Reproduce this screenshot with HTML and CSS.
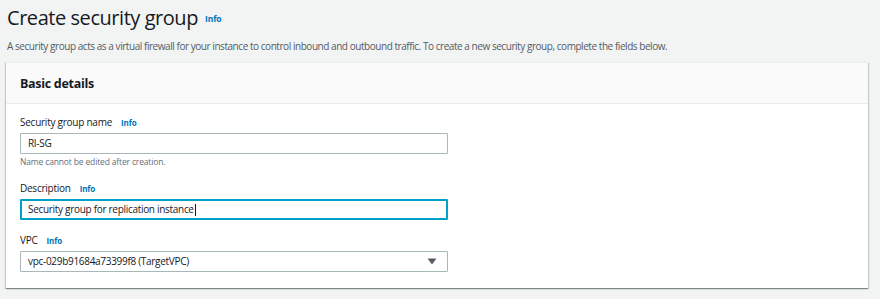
FILE: index.html
```html
<!DOCTYPE html>
<html lang="en">
<head>
<meta charset="utf-8">
<title>Create security group</title>
<link rel="stylesheet" href="styles.css">
</head>
<body>
<main class="page">
  <header class="page-head">
    <h1 class="title">Create security group <a class="info info-title">Info</a></h1>
    <p class="lead">A security group acts as a virtual firewall for your instance to control inbound and outbound traffic. To create a new security group, complete the fields below.</p>
  </header>
  <section class="card">
    <div class="card-head"><h2 class="card-title">Basic details</h2></div>
    <div class="card-body">
      <div class="field">
        <label class="label">Security group name <a class="info">Info</a></label>
        <div class="input">RI-SG</div>
        <div class="hint">Name cannot be edited after creation.</div>
      </div>
      <div class="field">
        <label class="label">Description <a class="info">Info</a></label>
        <div class="input input-focus">Security group for replication instance<span class="caret"></span></div>
      </div>
      <div class="field">
        <label class="label">VPC <a class="info">Info</a></label>
        <div class="input select">vpc-029b91684a73399f8 (TargetVPC)
          <svg class="arrow" width="10" height="7" viewBox="0 0 10 7"><path d="M0.5 0.5 H9.5 L5 6.5 Z" fill="#545b64"/></svg>
        </div>
      </div>
    </div>
  </section>
</main>
</body>
</html>
```
FILE: styles.css
```css
html, body {
  margin: 0;
  padding: 0;
  background: #f2f3f3;
  font-family: "Open Sans", "Noto Sans", sans-serif;
  color: #16191f;
}
.page {
  padding: 4px 12px 12px 6px;
}
.page-head {
  padding-left: 1px;
}
.title {
  margin: 0;
  font-size: 20px;
  font-weight: 400;
  line-height: 28px;
  letter-spacing: -0.45px;
  display: flex;
  align-items: baseline;
  gap: 7px;
}
.info {
  color: #0073bb;
  font-weight: 700;
  font-size: 8px;
  letter-spacing: -0.1px;
}
.info-title {
  font-size: 8.5px;
  position: relative;
  top: -3px;
}
.lead {
  margin: 3px 0 0;
  font-size: 10px;
  line-height: 14px;
  color: #545b64;
  letter-spacing: -0.45px;
}
.card {
  margin-top: 9px;
  background: #fff;
  box-shadow: 0 1px 1px 0 rgba(0, 28, 36, 0.3), 1px 1px 1px 0 rgba(0, 28, 36, 0.15), -1px 1px 1px 0 rgba(0, 28, 36, 0.15);
  border-top: 1px solid #eaeded;
}
.card-head {
  background: #fafafa;
  border-bottom: 1px solid #eaeded;
  height: 40px;
  display: flex;
  align-items: center;
  padding-left: 14px;
}
.card-title {
  margin: 0;
  font-size: 12.5px;
  font-weight: 700;
  letter-spacing: -0.3px;
}
.card-body {
  padding: 10px 14px 16px;
  display: flex;
  flex-direction: column;
  gap: 12px;
}
.field {
  display: flex;
  flex-direction: column;
}
.label {
  font-size: 10px;
  line-height: 16px;
  letter-spacing: -0.25px;
  display: flex;
  gap: 9px;
  align-items: baseline;
  margin-bottom: 2px;
  color: #16191f;
}
.input {
  width: 428px;
  box-sizing: border-box;
  height: 21px;
  border: 1px solid #aab7b8;
  border-radius: 1px;
  background: #fff;
  font-size: 10px;
  letter-spacing: -0.3px;
  line-height: 19px;
  padding: 0 7px;
  display: flex;
  align-items: center;
  color: #16191f;
}
.input-focus {
  border: 2px solid #00a1c9;
  padding: 0 6px;
}
.caret {
  display: inline-block;
  width: 1px;
  height: 12px;
  background: #16191f;
  margin-left: 1px;
}
.select {
  justify-content: space-between;
}
.arrow {
  margin-right: 3px;
}
.hint {
  font-size: 8.5px;
  line-height: 12px;
  letter-spacing: -0.15px;
  color: #687078;
  margin-top: 2px;
}
```
